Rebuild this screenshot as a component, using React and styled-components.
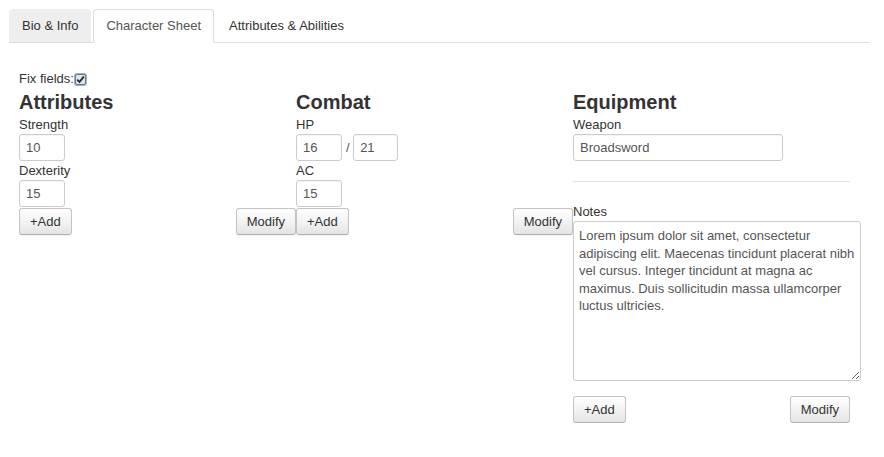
import React from "react";
import styled, { createGlobalStyle } from "styled-components";

const Global = createGlobalStyle`
  body {
    margin: 8px;
    background: #fff;
    font-family: "Liberation Sans", Arial, sans-serif;
    font-size: 13px;
    color: #333;
  }
  * { box-sizing: border-box; }
`;

const Page = styled.div`
  padding: 1px 0 0 1px;
  width: 861px;
`;

const TabBar = styled.ul`
  display: flex;
  align-items: flex-start;
  list-style: none;
  margin: 0;
  padding: 0;
  border-bottom: 1px solid #ddd;
`;

const Tab = styled.li`
  margin-right: 2px;
  line-height: 15px;
  border-radius: 4px 4px 0 0;
  padding: ${(p) => (p.$active ? "8px 12px 9px" : "9px 13px")};
  border: ${(p) => (p.$active ? "1px solid #ddd" : "none")};
  border-bottom-color: transparent;
  margin-bottom: ${(p) => (p.$active ? "-1px" : "0")};
  background: ${(p) => (p.$active ? "#fff" : p.$filled ? "#eee" : "transparent")};
  color: ${(p) => (p.$active ? "#555" : "#333")};
  white-space: nowrap;
`;

const Content = styled.div`
  padding: 0 10px;
`;

const FixRow = styled.div`
  margin-top: 28px;
  display: flex;
  align-items: center;
  height: 15px;
  line-height: 15px;
  color: #333;
`;

const CheckBox = styled.span`
  display: inline-flex;
  align-items: center;
  justify-content: center;
  width: 11px;
  height: 11px;
  margin-left: 1px;
  margin-top: 2px;
  border: 1px solid #777;
  border-radius: 2px;
  background: #e2e2e2;
  box-shadow: 0 0 0 1px #8fb2ec;
`;

const Columns = styled.div`
  display: grid;
  grid-template-columns: 277px 277px 277px;
`;

const Column = styled.div`
  display: flex;
  flex-direction: column;
  align-items: flex-start;
`;

const Heading = styled.h2`
  margin: 5px 0 2px;
  font-size: 20px;
  line-height: 22px;
  font-weight: bold;
  color: #333;
`;

const Label = styled.label`
  display: block;
  padding: 2px 0;
  line-height: 15px;
  color: #333;
`;

const Input = styled.input`
  display: block;
  height: 27px;
  width: ${(p) => p.$w || 46}px;
  padding: 0 6px;
  border: 1px solid #ccc;
  border-radius: 3px;
  font-family: "Liberation Sans", Arial, sans-serif;
  font-size: 13px;
  color: #555;
  background: #fff;
  box-shadow: inset 0 1px 1px rgba(0, 0, 0, 0.04);
  outline: none;
`;

const InlineRow = styled.div`
  display: flex;
  align-items: center;
`;

const Slash = styled.span`
  margin: 0 3.5px 0 4px;
  color: #555;
`;

const ButtonRow = styled.div`
  display: flex;
  justify-content: space-between;
  width: 277px;
  margin-top: ${(p) => p.$top || 1}px;
`;

const Button = styled.button`
  height: 27px;
  padding: 0 10px;
  border: 1px solid #c4c4c4;
  border-bottom-color: #b0b0b0;
  border-radius: 3px;
  background: linear-gradient(to bottom, #ffffff 0%, #f4f4f4 45%, #e4e4e4 100%);
  font-family: "Liberation Sans", Arial, sans-serif;
  font-size: 13px;
  color: #333;
  box-shadow: 0 1px 1px rgba(0, 0, 0, 0.05);
`;

const Rule = styled.hr`
  width: 277px;
  margin: 20px 0;
  border: 0;
  border-top: 1px solid #e2e2e2;
  height: 0;
`;

const Notes = styled.textarea`
  display: block;
  width: 288px;
  height: 160px;
  margin: 0;
  padding: 5px 4px 5px 5px;
  border: 1px solid #ccc;
  border-radius: 3px;
  font-family: "Liberation Sans", Arial, sans-serif;
  font-size: 13px;
  line-height: 17.6px;
  color: #555;
  outline: none;
  overflow: hidden;
`;

const notes =
  "Lorem ipsum dolor sit amet, consectetur adipiscing elit. Maecenas tincidunt placerat nibh vel cursus. Integer tincidunt at magna ac maximus. Duis sollicitudin massa ullamcorper luctus ultricies.";

export default function App() {
  return (
    <Page>
      <Global />
      <TabBar>
        <Tab $filled>Bio &amp; Info</Tab>
        <Tab $active>Character Sheet</Tab>
        <Tab>Attributes &amp; Abilities</Tab>
      </TabBar>
      <Content>
        <FixRow>
          Fix fields:
          <CheckBox>
            <svg width="9" height="9" viewBox="0 0 9 9">
              <path d="M1.2 4.6 L3.5 7 L7.8 1.6" fill="none" stroke="#222" strokeWidth="1.8" />
            </svg>
          </CheckBox>
        </FixRow>
        <Columns>
          <Column>
            <Heading>Attributes</Heading>
            <Label>Strength</Label>
            <Input defaultValue="10" />
            <Label>Dexterity</Label>
            <Input defaultValue="15" />
            <ButtonRow>
              <Button>+Add</Button>
              <Button>Modify</Button>
            </ButtonRow>
          </Column>
          <Column>
            <Heading>Combat</Heading>
            <Label>HP</Label>
            <InlineRow>
              <Input defaultValue="16" />
              <Slash>/</Slash>
              <Input $w={45} defaultValue="21" />
            </InlineRow>
            <Label>AC</Label>
            <Input defaultValue="15" />
            <ButtonRow>
              <Button>+Add</Button>
              <Button>Modify</Button>
            </ButtonRow>
          </Column>
          <Column>
            <Heading>Equipment</Heading>
            <Label>Weapon</Label>
            <Input $w={210} defaultValue="Broadsword" />
            <Rule />
            <Label>Notes</Label>
            <Notes defaultValue={notes} />
            <ButtonRow $top={15}>
              <Button>+Add</Button>
              <Button>Modify</Button>
            </ButtonRow>
          </Column>
        </Columns>
      </Content>
    </Page>
  );
}
